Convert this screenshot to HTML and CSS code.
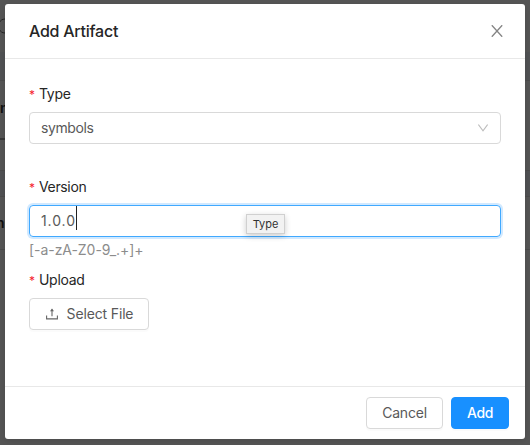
FILE: index.html
```html
<!DOCTYPE html>
<html lang="en">
<head>
<meta charset="utf-8">
<title>Add Artifact</title>
<link rel="stylesheet" href="styles.css">
</head>
<body>
<div class="backdrop" aria-hidden="true">
  <div class="band band-top"></div>
  <div class="band band-head"></div>
  <div class="band band-row"></div>
  <div class="band band-gap"></div>
  <div class="band band-head2"></div>
  <div class="band band-row2"></div>
  <div class="rule"></div>
  <svg class="search-ring" width="6" height="16" viewBox="0 0 6 16"><path d="M6 1H5C2 1 .5 2.5-1 5M-1 11C.5 13.5 2 15 5 15H6" fill="none" stroke="#252525"/></svg>
  <span class="peek peek-a">n</span>
  <span class="peek peek-b">n</span>
</div>
<main class="modal">
  <header class="modal-header">
    <h1 class="title">Add Artifact</h1>
    <svg class="close" width="12" height="12" viewBox="0 0 12 12"><path d="M.8.2 11.2 11.8M11.2.2.8 11.8" fill="none" stroke="#858585" stroke-width="1.3"/></svg>
  </header>
  <section class="modal-body">
    <div class="field field-type">
      <label class="label"><span class="star">*</span><span class="t-type">Type</span></label>
      <div class="control"><span class="t-symbols">symbols</span>
        <svg class="chevron" width="10" height="8" viewBox="0 0 10 8"><path d="M.4.5 5 6.8 9.6.5" fill="none" stroke="#bdbdbd" stroke-width="1.1"/></svg>
      </div>
    </div>
    <div class="field field-version">
      <label class="label"><span class="star">*</span><span class="t-version">Version</span></label>
      <div class="control focused"><span class="t-value">1.0.0</span><span class="caret"></span><span class="tooltip">Type</span></div>
      <div class="hint"><span class="t-hint">[-a-zA-Z0-9_.+]+</span></div>
    </div>
    <div class="field">
      <label class="label"><span class="star">*</span><span class="t-upload">Upload</span></label>
      <button class="btn select-file">
        <svg width="12" height="12" viewBox="0 0 12 12"><path d="M.6 7.4V10.9H11.4V7.4M6 8.2V1.6" fill="none" stroke="#666" stroke-width="1.1"/><path d="M6 .6 8 3.2H4Z" fill="#666"/></svg>
        <span class="t-select">Select File</span>
      </button>
    </div>
  </section>
  <footer class="modal-footer">
    <button class="btn cancel"><span class="t-cancel">Cancel</span></button>
    <button class="btn primary"><span class="t-add">Add</span></button>
  </footer>
</main>
</body>
</html>
```
FILE: styles.css
```css
* { box-sizing: border-box; }
body {
  margin: 0;
  width: 530px;
  height: 445px;
  padding: 4px 5px 6px;
  position: relative;
  overflow: hidden;
  background: #555;
  font: 14px/22px Inter, "Liberation Sans", sans-serif;
  color: #262626;
}
.backdrop { position: absolute; inset: 0; }
.band-top { height: 80px; background: linear-gradient(#555 52px, #515254 52px); }
.band-head { height: 58px; background: #555; border-top: 1px solid #4c4c4c; }
.band-row { height: 32px; background: #555; }
.band-gap { height: 26px; background: #505153; border-top: 1px solid #4b4b4b; }
.band-head2 { height: 53px; background: #555; border-top: 1px solid #4b4b4b; }
.band-row2 { height: 196px; background: #555; border-top: 1px solid #4b4b4b; }
.rule { position: absolute; left: 0; top: 138px; width: 5px; height: 2px; background: #383838; }
.search-ring { position: absolute; left: 0; top: 18px; }
.peek { position: absolute; font-weight: 600; color: #101010; }
.peek-a { left: 0; top: 97px; }
.peek-b { left: -4px; top: 212px; }
.modal {
  position: relative;
  height: 435px;
  display: flex;
  flex-direction: column;
  background: #fff;
  border-radius: 3px;
  box-shadow: 0 2px 6px rgba(0, 0, 0, .12);
}
.modal-header {
  height: 55px;
  padding: 0 22px 0 24px;
  display: flex;
  align-items: center;
  justify-content: space-between;
  border-bottom: 1px solid #e8e8e8;
}
.title { margin: 0; font-size: 16px; font-weight: 500; line-height: 22px; letter-spacing: -.25px; }
.modal-body { flex: 1; padding: 24px; }
.label { display: flex; height: 29px; }
.star { width: 10px; color: #f5222d; font-size: 12px; line-height: 23px; }
.t-version { letter-spacing: -.35px; }
.t-upload { letter-spacing: -.3px; }
.t-type { letter-spacing: -.3px; }
.t-symbols { letter-spacing: -.4px; }
.t-value { letter-spacing: .9px; }
.t-hint { letter-spacing: -.05px; }
.t-select { letter-spacing: -.15px; }
.t-cancel { letter-spacing: -.2px; }
.field-type { height: 93px; }
.field-version { height: 93px; }
.control {
  position: relative;
  height: 32px;
  padding: 0 12px 0 11px;
  display: flex;
  align-items: center;
  border: 1px solid #d9d9d9;
  border-radius: 4px;
  color: #595959;
}
.focused { border-color: #40a9ff; box-shadow: 0 0 0 2px rgba(24, 144, 255, .2); }
.chevron { margin-left: auto; }
.caret { width: 1px; height: 24px; margin-top: -6px; background: #222; }
.tooltip {
  position: absolute;
  left: 216px;
  top: 8px;
  width: 39px;
  height: 20px;
  border: 1px solid #d0d0d0;
  background: #f2f2f2;
  box-shadow: 0 2px 6px rgba(0, 0, 0, .2);
  font-size: 11px;
  line-height: 19px;
  text-align: center;
  color: #333;
}
.hint { color: #8c8c8c; padding-top: 2px; }
.btn {
  height: 32px;
  padding: 0;
  display: flex;
  align-items: center;
  justify-content: center;
  border: 1px solid #d9d9d9;
  border-radius: 4px;
  background: #fff;
  color: #595959;
  font: 14px/22px Inter, "Liberation Sans", sans-serif;
  box-shadow: 0 2px 0 rgba(0, 0, 0, .015);
}
.select-file { width: 120px; gap: 9px; padding-left: 1px; }
.modal-footer {
  height: 53px;
  padding: 10px 16px;
  display: flex;
  justify-content: flex-end;
  gap: 8px;
  border-top: 1px solid #e8e8e8;
}
.cancel { width: 77px; }
.primary { width: 58px; background: #1890ff; border-color: #1890ff; color: #fff; font-weight: 500; letter-spacing: -.3px; }
```
